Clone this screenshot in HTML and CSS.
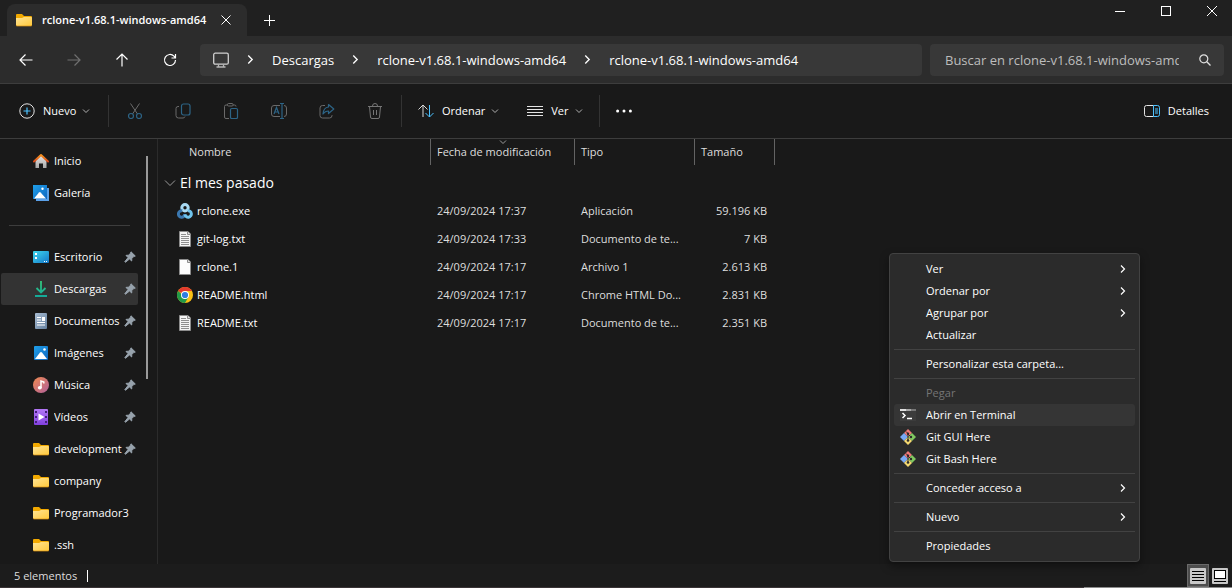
FILE: index.html
```html
<!DOCTYPE html>
<html lang="es">
<head>
  <meta charset="utf-8">
  <title>rclone-v1.68.1-windows-amd64</title>
  <link rel="stylesheet" href="styles.css">
</head>
<body>

<!-- shared icons -->
<svg class="defs" width="0" height="0">
  <defs>
    <linearGradient id="gFolder" x1="0" y1="0" x2="1" y2="1"><stop offset="0" stop-color="#ffe494"/><stop offset="1" stop-color="#ffc93c"/></linearGradient>
    <linearGradient id="gBlue" x1="0" y1="0" x2="1" y2="1"><stop offset="0" stop-color="#1fa0ea"/><stop offset="1" stop-color="#0f67c0"/></linearGradient>
    <linearGradient id="gDesk" x1="0" y1="0" x2="1" y2="1"><stop offset="0" stop-color="#3fd8ee"/><stop offset="1" stop-color="#1477c9"/></linearGradient>
    <linearGradient id="gDown" x1="0" y1="0" x2="0" y2="16" gradientUnits="userSpaceOnUse"><stop offset="0" stop-color="#35c97c"/><stop offset="1" stop-color="#13a89a"/></linearGradient>
    <linearGradient id="gDoc" x1="0" y1="0" x2="1" y2="1"><stop offset="0" stop-color="#a9bdd3"/><stop offset="1" stop-color="#64809f"/></linearGradient>
    <linearGradient id="gMusic" x1="0" y1="0" x2="1" y2="1"><stop offset="0" stop-color="#f08a4f"/><stop offset="1" stop-color="#b0609c"/></linearGradient>
    <linearGradient id="gVideo" x1="0" y1="0" x2="0" y2="1"><stop offset="0" stop-color="#b277f5"/><stop offset="1" stop-color="#8240e0"/></linearGradient>
    <linearGradient id="gHouse" x1="0" y1="0" x2="0" y2="1"><stop offset="0" stop-color="#e8e8e8"/><stop offset="1" stop-color="#a8a8a8"/></linearGradient>
    <linearGradient id="gRoof" x1="0" y1="0" x2="0" y2="1"><stop offset="0" stop-color="#f7931e"/><stop offset="1" stop-color="#d6491a"/></linearGradient>
  </defs>
  <symbol id="folder" viewBox="0 0 16 16">
    <path d="M0 3a1 1 0 0 1 1-1h5l2 2h7a1 1 0 0 1 1 1v3H0z" fill="#f2a900"/>
    <path d="M0 6h6l2-1h7a1 1 0 0 1 1 1v7a1 1 0 0 1-1 1H1a1 1 0 0 1-1-1z" fill="url(#gFolder)"/>
    <path d="M0 13a1 1 0 0 0 1 1h14a1 1 0 0 0 1-1" fill="none" stroke="#dc9410" stroke-width=".7"/>
  </symbol>
  <symbol id="pin" viewBox="0 0 12 12">
    <path d="M7 .8 11.3 5 9.6 5.6 7.8 7.6 7.7 10 5.5 8 1.4 11.3.8 10.7 4 6.6 2 4.4 4.4 4.2 6.4 2.5z" fill="#97a2ac" stroke="#97a2ac" stroke-linejoin="round"/>
  </symbol>
  <symbol id="right" viewBox="0 0 8 8">
    <path d="M2 .5 5.5 4 2 7.5" fill="none" stroke="currentColor" stroke-width="1.2"/>
  </symbol>
  <symbol id="down" viewBox="0 0 8 8">
    <path d="M1 2.5 4 5.5 7 2.5" fill="none" stroke="currentColor"/>
  </symbol>
  <symbol id="text" viewBox="0 0 16 16">
    <path d="M2.5.5h8.500l2.500 2.500v12.500h-11z" fill="#f4f4f4" stroke="#8c8c8c"/>
    <path d="M10.500.500v3h3" fill="#ddd" stroke="#8c8c8c"/>
    <path d="M4 3.500h5M4 5.500h8M4 7.500h8M4 9.500h8M4 11.500h8M4 13.500h8" stroke="#8f8f8f"/>
  </symbol>
  <symbol id="picture" viewBox="0 0 16 16">
    <rect x="1" y="1" width="14" height="14" rx="1" fill="url(#gBlue)"/>
    <path d="M2 14 7 7.500q1-1 2 0l5 6.500z" fill="#fff"/>
    <circle cx="11.500" cy="4.500" r="1.300" fill="#fff"/>
  </symbol>
  <symbol id="git" viewBox="0 0 16 16">
    <path d="M8 0 12 4 8 8 4 4z" fill="#f07878"/>
    <path d="M4 4 8 8 4 12 0 8z" fill="#78a8f5"/>
    <path d="M12 4 16 8 12 12 8 8z" fill="#80c860"/>
    <path d="M8 8 12 12 8 16 4 12z" fill="#f5d970"/>
    <path d="M6 2.500 8 4.500v7M8 5l3 3" fill="none" stroke="#2b2b2b"/>
    <circle cx="8" cy="4.800" r="1.200" fill="#2b2b2b"/><circle cx="8" cy="11.500" r="1.300" fill="#2b2b2b"/><circle cx="11" cy="8" r="1.200" fill="#2b2b2b"/>
  </symbol>
</svg>

<div class="window">

  <header class="titlebar">
    <div class="tab">
      <svg class="icon"><use href="#folder"/></svg>
      <span class="tab-title">rclone-v1.68.1-windows-amd64</span>
      <button class="tab-close" aria-label="Cerrar pestaña"><svg width="10" height="10"><path d="M.5.5l9 9M9.500.500l-9 9" stroke="#fff"/></svg></button>
    </div>
    <button class="new-tab" aria-label="Nueva pestaña"><svg width="11" height="11"><path d="M5.500 0v11M0 5.500h11" stroke="#fff"/></svg></button>
    <div class="caption">
      <button aria-label="Minimizar"><svg width="10" height="10"><path d="M0 5.500h10" stroke="#fff"/></svg></button>
      <button aria-label="Maximizar"><svg width="10" height="10"><rect x=".5" y=".5" width="9" height="9" fill="none" stroke="#fff"/></svg></button>
      <button aria-label="Cerrar"><svg width="10" height="10"><path d="M0 0l10 10M10 0L0 10" stroke="#fff"/></svg></button>
    </div>
  </header>

  <nav class="navbar">
    <button class="nav-btn" aria-label="Atrás"><svg width="14" height="12"><path d="M13.500 6H1M6.500.5 1 6l5.500 5.500" fill="none" stroke="#fff" stroke-width="1.200"/></svg></button>
    <button class="nav-btn" aria-label="Adelante" disabled><svg width="14" height="12"><path d="M.5 6H13M7.500.5 13 6l-5.500 5.500" fill="none" stroke="#707070" stroke-width="1.200"/></svg></button>
    <button class="nav-btn" aria-label="Arriba"><svg width="12" height="14"><path d="M6 13.500V1M.5 6.500 6 1l5.500 5.500" fill="none" stroke="#fff" stroke-width="1.200"/></svg></button>
    <button class="nav-btn" aria-label="Actualizar"><svg width="14" height="14"><path d="M12.500 7A5.500 5.500 0 1 1 11 3.200L12.500 5M12.500 1v4h-4" fill="none" stroke="#fff" stroke-width="1.200"/></svg></button>
    <div class="address">
      <svg width="16" height="16" class="pc"><rect x=".7" y="1.200" width="14.600" height="11" rx="1.500" fill="none" stroke="#d0d0d0" stroke-width="1.300"/><path d="M5.500 12.500v2M10.500 12.500v2M3.500 15h9" stroke="#b4b4b4" stroke-width="1.300"/></svg>
      <svg class="crumb-sep"><use href="#right"/></svg>
      <a href="#">Descargas</a>
      <svg class="crumb-sep"><use href="#right"/></svg>
      <a href="#">rclone-v1.68.1-windows-amd64</a>
      <svg class="crumb-sep"><use href="#right"/></svg>
      <a href="#">rclone-v1.68.1-windows-amd64</a>
    </div>
    <div class="search">
      <input type="text" aria-label="Buscar" placeholder="Buscar en rclone-v1.68.1-windows-amd64">
      <svg width="12" height="12"><circle cx="4.800" cy="4.800" r="4" fill="none" stroke="#e0e0e0" stroke-width="1.200"/><path d="M7.800 7.800 11.500 11.500" stroke="#e0e0e0" stroke-width="1.300"/></svg>
    </div>
  </nav>

  <div class="toolbar">
    <button class="tool tool-new">
      <svg class="icon"><circle cx="8" cy="8" r="7.200" fill="none" stroke="#e4e4e4"/><path d="M8 4.500v7M4.500 8h7" stroke="#4cc2ff" stroke-width="1.200"/></svg>
      Nuevo <svg class="caret"><use href="#down"/></svg>
    </button>
    <div class="group">
      <button class="tool-icon" aria-label="Cortar" disabled><svg class="icon"><path d="M3.500.5 10.500 11M12.500.5 5.500 11" stroke="#6a6a6a"/><circle cx="4" cy="13" r="2.500" fill="none" stroke="#2d6486" stroke-width="1.200"/><circle cx="12" cy="13" r="2.500" fill="none" stroke="#2d6486" stroke-width="1.200"/></svg></button>
      <button class="tool-icon" aria-label="Copiar" disabled><svg class="icon"><path d="M4 3.500H3a2 2 0 0 0-2 2v7a2.500 2.500 0 0 0 2.500 2.500H8a2 2 0 0 0 2-1.500" fill="none" stroke="#6a6a6a"/><rect x="6.500" y="1" width="8.500" height="11" rx="2" fill="none" stroke="#2d6486" stroke-width="1.200"/></svg></button>
      <button class="tool-icon" aria-label="Pegar" disabled><svg class="icon"><path d="M4.500 2H3a1.500 1.500 0 0 0-1.500 1.500v10.500A1.500 1.500 0 0 0 3 15.500h3M10 2h1.500A1.500 1.500 0 0 1 13 3.500M4.500 1.500a1 1 0 0 1 1-1h3.500a1 1 0 0 1 1 1v.5a1 1 0 0 1-1 1H5.500a1 1 0 0 1-1-1z" fill="none" stroke="#6a6a6a"/><rect x="7.500" y="5.500" width="7" height="10" rx="1.300" fill="none" stroke="#2d6486" stroke-width="1.200"/></svg></button>
      <button class="tool-icon" aria-label="Cambiar nombre" disabled><svg class="icon"><path d="M9 2.500H3a2.500 2.500 0 0 0-2.500 2.500v6A2.500 2.500 0 0 0 3 13.500h6M13 2.500a2.500 2.500 0 0 1 2.500 2.500v6a2.500 2.500 0 0 1-2.500 2.500" fill="none" stroke="#6a6a6a"/><path d="M3 11 5.500 4.500 8 11M4 9h3.200M11 .5v15M9 .5h4M9 15.500h4" fill="none" stroke="#2d6486" stroke-width="1.200"/></svg></button>
      <button class="tool-icon" aria-label="Compartir" disabled><svg class="icon"><path d="M6 2.500H3.500A2.500 2.500 0 0 0 1 5v7.500A2.500 2.500 0 0 0 3.500 15h7a2.500 2.500 0 0 0 2.500-2.500V12" fill="none" stroke="#6a6a6a"/><path d="M9.500 1.500 14.800 6l-5.300 4.500V8Q6 8 4 11q.5-6.500 5.500-7z" fill="none" stroke="#2d6486" stroke-width="1.200" stroke-linejoin="round"/></svg></button>
      <button class="tool-icon" aria-label="Eliminar" disabled><svg class="icon"><path d="M1 3.500h14M5.500 3.500V3a2.500 2.500 0 0 1 5 0v.5M2.500 3.500l1 10.500a1.500 1.500 0 0 0 1.500 1.500h6a1.500 1.500 0 0 0 1.500-1.500l1-10.500M6.500 7v5M9.500 7v5" fill="none" stroke="#757575"/></svg></button>
    </div>
    <div class="group">
      <button class="tool">
        <svg class="icon"><path d="M5 14V2M.5 6.500 5 2l4.500 4.500" fill="none" stroke="#d8d8d8"/><path d="M11.500 2v12M7.500 10l4 4 4-4" fill="none" stroke="#4cc2ff"/></svg>
        Ordenar <svg class="caret"><use href="#down"/></svg>
      </button>
      <button class="tool">
        <svg class="icon"><path d="M0 3.500h16M0 6.500h16M0 9.500h16M0 12.500h16" stroke="#e4e4e4"/></svg>
        Ver <svg class="caret"><use href="#down"/></svg>
      </button>
    </div>
    <button class="tool" aria-label="Más opciones"><svg class="icon"><circle cx="1.600" cy="8" r="1.500" fill="#fff"/><circle cx="8" cy="8" r="1.500" fill="#fff"/><circle cx="14.400" cy="8" r="1.500" fill="#fff"/></svg></button>
    <button class="tool details">
      <svg class="icon"><path d="M9.500 2.500h-7a2 2 0 0 0-2 2v7a2 2 0 0 0 2 2h7" fill="none" stroke="#e4e4e4"/><path d="M9.500 2.500h4a2 2 0 0 1 2 2v7a2 2 0 0 1-2 2h-4zM11 6h3M11 8h3M11 10h3" fill="none" stroke="#4cc2ff"/></svg>
      Detalles
    </button>
  </div>

  <div class="content">
    <aside class="sidebar">
      <div class="places">
        <a href="#" class="place"><svg class="icon"><path d="M2.500 6.500 8 2l5.500 4.500V15H10v-4.500H6V15H2.500z" fill="url(#gHouse)"/><path d="M1 8.500 8 2l7 6.500" fill="none" stroke="url(#gRoof)" stroke-width="2" stroke-linecap="round" stroke-linejoin="round"/></svg><span>Inicio</span></a>
        <a href="#" class="place"><svg class="icon"><path d="M3 3h13v13H3z" fill="#5aa0e8"/><path d="M0 0h14v14H0z" fill="url(#gBlue)"/><path d="M1 13.500 6 7.500q.8-.8 1.600 0L13 13.500z" fill="#fff"/><circle cx="9.500" cy="3.800" r="1.200" fill="#fff"/></svg><span>Galería</span></a>
        <hr>
        <a href="#" class="place"><svg class="icon"><rect y="2" width="16" height="12" rx="1" fill="url(#gDesk)"/><path d="M2 4h2v2H2zM2 8h2v2H2z" fill="#fff"/><path d="M11 12.500h1M13 12.500h1" stroke="#fff"/></svg><span>Escritorio</span><svg class="pin"><use href="#pin"/></svg></a>
        <a href="#" class="place active"><svg class="icon"><path d="M8 0v11M3.500 7 8 11.500 12.500 7M2 15h12" fill="none" stroke="url(#gDown)" stroke-width="1.800"/></svg><span>Descargas</span><svg class="pin"><use href="#pin"/></svg></a>
        <a href="#" class="place"><svg class="icon"><rect x="2" width="12" height="16" rx="1" fill="url(#gDoc)"/><path d="M4 4.500h4M4 7h4M4 9.500h8M4 12h8" stroke="#fff"/><path d="M9 4h3v4H9z" fill="#fff"/></svg><span>Documentos</span><svg class="pin"><use href="#pin"/></svg></a>
        <a href="#" class="place"><svg class="icon"><use href="#picture"/></svg><span>Imágenes</span><svg class="pin"><use href="#pin"/></svg></a>
        <a href="#" class="place"><svg class="icon"><circle cx="8" cy="8" r="8" fill="url(#gMusic)"/><ellipse cx="6.800" cy="10.800" rx="2" ry="1.700" fill="#fff"/><path d="M8 11V4l2.800 1v1.500" fill="none" stroke="#fff" stroke-width="1.500"/></svg><span>Música</span><svg class="pin"><use href="#pin"/></svg></a>
        <a href="#" class="place"><svg class="icon"><rect x="1" width="14" height="16" rx="1" fill="url(#gVideo)"/><path d="M2 3h2M2 8h2M2 13h2M12 3h2M12 8h2M12 13h2" stroke="#42207a" stroke-width="2"/><path d="M5.500 4.500v7l6-3.500z" fill="#fff"/></svg><span>Vídeos</span><svg class="pin"><use href="#pin"/></svg></a>
        <a href="#" class="place"><svg class="icon"><use href="#folder"/></svg><span>development</span><svg class="pin"><use href="#pin"/></svg></a>
        <a href="#" class="place"><svg class="icon"><use href="#folder"/></svg><span>company</span></a>
        <a href="#" class="place"><svg class="icon"><use href="#folder"/></svg><span>Programador3</span></a>
        <a href="#" class="place"><svg class="icon"><use href="#folder"/></svg><span>.ssh</span></a>
      </div>
      <div class="scrollbar"><div class="thumb"></div></div>
    </aside>

    <main class="files">
      <table>
        <colgroup><col class="c-name"><col class="c-date"><col class="c-type"><col class="c-size"></colgroup>
        <thead>
          <tr>
            <th class="name">Nombre</th>
            <th>Fecha de modificación<svg class="sort-mark"><use href="#down"/></svg></th>
            <th>Tipo</th>
            <th>Tamaño</th>
          </tr>
        </thead>
        <tbody>
          <tr class="group-row">
            <td colspan="4"><button class="group-btn"><svg width="12" height="12"><path d="M1 3.500 6 8.500 11 3.500" fill="none" stroke="#9a9a9a"/></svg>El mes pasado</button></td>
          </tr>
          <tr>
            <td class="name"><div class="file"><svg class="icon"><g fill="none" stroke-width="3"><circle cx="8" cy="4.800" r="3.200" stroke="#a9daf3"/><path d="M5.200 7.800a3.200 3.200 0 1 0 2.600 3.200" stroke="#3b78b0"/><path d="M8 11.500a3.200 3.200 0 1 0 2.800-3.700" stroke="#70c4ec"/></g></svg>rclone.exe</div></td>
            <td>24/09/2024 17:37</td><td>Aplicación</td><td class="size">59.196 KB</td>
          </tr>
          <tr>
            <td class="name"><div class="file"><svg class="icon"><use href="#text"/></svg>git-log.txt</div></td>
            <td>24/09/2024 17:33</td><td>Documento de te...</td><td class="size">7 KB</td>
          </tr>
          <tr>
            <td class="name"><div class="file"><svg class="icon"><path d="M2.500.5h8.500l2.500 2.500v12.500h-11z" fill="#fcfcfc" stroke="#8c8c8c"/><path d="M10.500.500v3h3" fill="#ddd" stroke="#8c8c8c"/></svg>rclone.1</div></td>
            <td>24/09/2024 17:17</td><td>Archivo 1</td><td class="size">2.613 KB</td>
          </tr>
          <tr>
            <td class="name"><div class="file"><svg class="icon"><circle cx="8" cy="8" r="8" fill="#fbc116"/><path d="M8 8 1.070 4A8 8 0 0 1 14.930 4H8z" fill="#e33b2e"/><path d="M1.070 4A8 8 0 0 0 8 16l3.460-6H8z" fill="#229a48"/><circle cx="8" cy="8" r="4" fill="#fff"/><circle cx="8" cy="8" r="3.100" fill="#2f7de1"/></svg>README.html</div></td>
            <td>24/09/2024 17:17</td><td>Chrome HTML Do...</td><td class="size">2.831 KB</td>
          </tr>
          <tr>
            <td class="name"><div class="file"><svg class="icon"><use href="#text"/></svg>README.txt</div></td>
            <td>24/09/2024 17:17</td><td>Documento de te...</td><td class="size">2.351 KB</td>
          </tr>
        </tbody>
      </table>
    </main>
  </div>

  <footer class="statusbar">
    <span class="count">5 elementos</span>
    <div class="views">
      <button class="selected" aria-label="Detalles"><svg class="icon"><rect width="16" height="16" rx="1" fill="#c8c8c8"/><path d="M2 3.500h12M2 6.500h12M2 9.500h12M2 12.500h12" stroke="#000"/></svg></button>
      <button aria-label="Iconos grandes"><svg class="icon"><rect width="16" height="16" rx="1" fill="#c8c8c8"/><rect x="2.500" y="2.500" width="11" height="8" fill="#fff" stroke="#000"/><path d="M2 13.500h12" stroke="#000"/></svg></button>
    </div>
  </footer>

  <div class="menu">
    <button>Ver <svg class="more"><use href="#right"/></svg></button>
    <button>Ordenar por <svg class="more"><use href="#right"/></svg></button>
    <button>Agrupar por <svg class="more"><use href="#right"/></svg></button>
    <button>Actualizar</button>
    <hr>
    <button>Personalizar esta carpeta...</button>
    <hr>
    <button disabled>Pegar</button>
    <button class="with-icon hover"><svg class="icon"><path d="M0 2h16v12H0z" fill="#3c3c3c"/><path d="M0 3h6" stroke="#e0e0e0" stroke-width="2"/><path d="M6 3h5" stroke="#a8a8a8" stroke-width="2"/><path d="M11 3h5" stroke="#777" stroke-width="2"/><path d="M2.500 6 5 8.500 2.500 11M7 11.500h5" fill="none" stroke="#fff" stroke-width="1.500"/></svg>Abrir en Terminal</button>
    <button class="with-icon"><svg class="icon"><use href="#git"/></svg>Git GUI Here</button>
    <button class="with-icon"><svg class="icon"><use href="#git"/></svg>Git Bash Here</button>
    <hr>
    <button>Conceder acceso a <svg class="more"><use href="#right"/></svg></button>
    <hr>
    <button>Nuevo <svg class="more"><use href="#right"/></svg></button>
    <hr>
    <button>Propiedades</button>
  </div>

</div>

</body>
</html>
```
FILE: styles.css
```css
* {
  box-sizing: border-box;
}
body {
  margin: 0;
  background-color: #191919;
  color: #fff;
  font-family: "Open Sans", "Noto Sans", sans-serif;
  font-size: 11px;
  line-height: 16px;
}
button {
  padding: 0;
  border: none;
  background: none;
  color: inherit;
  font: inherit;
}
a {
  color: inherit;
  text-decoration: none;
}
svg {
  display: block;
  flex-shrink: 0;
}
hr {
  margin: 0;
  border: none;
}
.defs {
  position: absolute;
}
.icon {
  width: 16px;
  height: 16px;
}
.window {
  position: relative;
  display: flex;
  flex-direction: column;
  min-height: 100vh;
}

/* title bar */
.titlebar {
  display: flex;
  height: 36px;
  padding-left: 7px;
  overflow: hidden;
  background-color: #202020;
}
.tab {
  display: flex;
  align-items: center;
  width: 240px;
  margin-top: 4px;
  padding: 0 9px;
  border-radius: 8px 8px 0 0;
  background-color: #2c2c2c;
}
.tab-title {
  flex: 1;
  margin: 0 7px 0 10px;
  overflow: hidden;
  white-space: nowrap;
  font-weight: 600;
}
.tab-close {
  display: grid;
  place-items: center;
  width: 24px;
  height: 24px;
}
.new-tab {
  display: grid;
  place-items: center;
  width: 44px;
  padding-top: 4px;
}
.caption {
  display: flex;
  margin-left: auto;
  margin-right: -3px;
}
.caption button {
  display: grid;
  place-items: center;
  width: 46px;
  height: 22px;
}

/* navigation */
.navbar {
  display: flex;
  align-items: center;
  height: 48px;
  padding: 0 8px 0 2px;
  border-bottom: 1px solid #3d3d3d;
  background-color: #2c2c2c;
  font-size: 13px;
}
.nav-btn {
  display: grid;
  place-items: center;
  width: 48px;
  height: 32px;
}
.address {
  display: flex;
  flex: 1;
  align-items: center;
  height: 32px;
  margin: 0 8px 0 6px;
  padding-left: 13px;
  border-radius: 4px;
  background-color: #383838;
  white-space: nowrap;
}
.crumb-sep {
  width: 9px;
  height: 9px;
  margin: 0 17px;
}
.search {
  display: flex;
  align-items: center;
  width: 294px;
  height: 32px;
  padding: 0 13px 0 15px;
  border-radius: 4px;
  background-color: #383838;
}
.search input {
  flex: 1;
  min-width: 0;
  margin-right: 20px;
  padding: 0;
  border: none;
  outline: none;
  background: none;
  color: #fff;
  font: inherit;
}
.search input::placeholder {
  color: #bdbdbd;
  opacity: 1;
}

/* command bar */
.toolbar {
  display: flex;
  align-items: center;
  height: 55px;
  padding: 0 23px 0 19px;
  border-bottom: 1px solid #3d3d3d;
}
.tool {
  display: flex;
  align-items: center;
  gap: 8px;
  height: 32px;
}
.tool-new {
  width: 89px;
}
.group {
  display: flex;
  align-items: center;
  height: 32px;
  border: 1px solid #333;
  border-width: 0 1px;
  padding: 0 16px;
}
.group:nth-child(2) {
  padding: 0 2px;
}
.group:nth-child(3) {
  gap: 28px;
  margin-right: 16px;
  border-left: none;
}
.tool-icon {
  display: grid;
  place-items: center;
  width: 48px;
  height: 32px;
}
.caret {
  width: 8px;
  height: 8px;
  margin-left: -2px;
  color: #b0b0b0;
}
.details {
  margin-left: auto;
}

/* navigation pane */
.content {
  display: flex;
  flex: 1;
}
.sidebar {
  display: flex;
  width: 158px;
  padding: 6px 0 3px 1px;
  border-right: 1px solid #2b2b2b;
}
.places {
  width: 137px;
}
.places hr {
  height: 1px;
  margin: 16px 8px 15px;
  background-color: #3d3d3d;
}
.place {
  display: flex;
  align-items: center;
  height: 32px;
  padding: 0 2px 0 32px;
  border-radius: 2px;
}
.place span {
  flex: 1;
  margin-left: 5px;
  overflow: hidden;
  white-space: nowrap;
}
.place.active {
  background-color: #333;
}
.pin {
  width: 12px;
  height: 12px;
  margin-left: 1px;
}
.scrollbar {
  flex: 1;
  padding: 11px 0 0 8px;
}
.thumb {
  width: 2px;
  height: 55%;
  background-color: #9a9a9a;
}

/* file list */
.files {
  flex: 1;
}
table {
  width: 617px;
  table-layout: fixed;
  border-spacing: 0;
}
.c-name {
  width: 273px;
}
.c-date {
  width: 144px;
}
.c-type {
  width: 120px;
}
.c-size {
  width: 80px;
}
th {
  position: relative;
  height: 26px;
  padding: 0 6px;
  border-right: 1px solid #636363;
  color: #dedede;
  font-weight: 400;
  text-align: left;
  white-space: nowrap;
}
th.name {
  padding-left: 31px;
}
.sort-mark {
  position: absolute;
  top: -1px;
  left: 50%;
  width: 8px;
  height: 8px;
  margin-left: -4px;
  color: #9a9a9a;
}
td {
  height: 28px;
  padding: 0 6px;
  color: #dedede;
  white-space: nowrap;
}
td.name {
  padding-left: 19px;
  color: #fff;
}
td.size {
  padding-right: 8px;
  text-align: right;
}
.file {
  display: flex;
  align-items: center;
  gap: 4px;
}
.group-row td {
  padding: 4px 0 0 6px;
}
.group-btn {
  display: flex;
  align-items: center;
  gap: 4px;
  height: 28px;
  color: #fff;
  font-size: 14px;
}

/* status bar */
.statusbar {
  display: flex;
  align-items: center;
  justify-content: space-between;
  height: 24px;
  padding: 0 1px 1px 14px;
  background: linear-gradient(to right, #3a3436 88%, #8c8c8c 88%) bottom / 100% 1px no-repeat #1c1c1c;
  color: #dedede;
}
.count {
  padding-right: 10px;
  border-right: 1px solid #fff;
  line-height: 12px;
}
.views {
  display: flex;
}
.views button {
  display: grid;
  place-items: center;
  width: 22px;
  height: 23px;
}
.views .selected {
  border: 1px solid #6a6a6a;
  background-color: #4d4d4d;
}

/* context menu */
.menu {
  position: absolute;
  top: 253px;
  right: 92px;
  width: 251px;
  padding: 4px;
  border: 1px solid #424242;
  border-radius: 4px;
  background-color: #2b2b2b;
  box-shadow: 0 4px 10px rgba(0, 0, 0, 0.4);
}
.menu button {
  display: flex;
  align-items: center;
  width: 100%;
  height: 22px;
  padding: 0 8px 0 32px;
  border-radius: 3px;
}
.menu .with-icon {
  gap: 10px;
  padding-left: 6px;
}
.menu .hover {
  background-color: #353535;
}
.menu button:disabled {
  color: #757575;
}
.menu hr {
  height: 1px;
  margin: 3px 0;
  background-color: #424242;
}
.more {
  width: 8px;
  height: 8px;
  margin-left: auto;
}
```
